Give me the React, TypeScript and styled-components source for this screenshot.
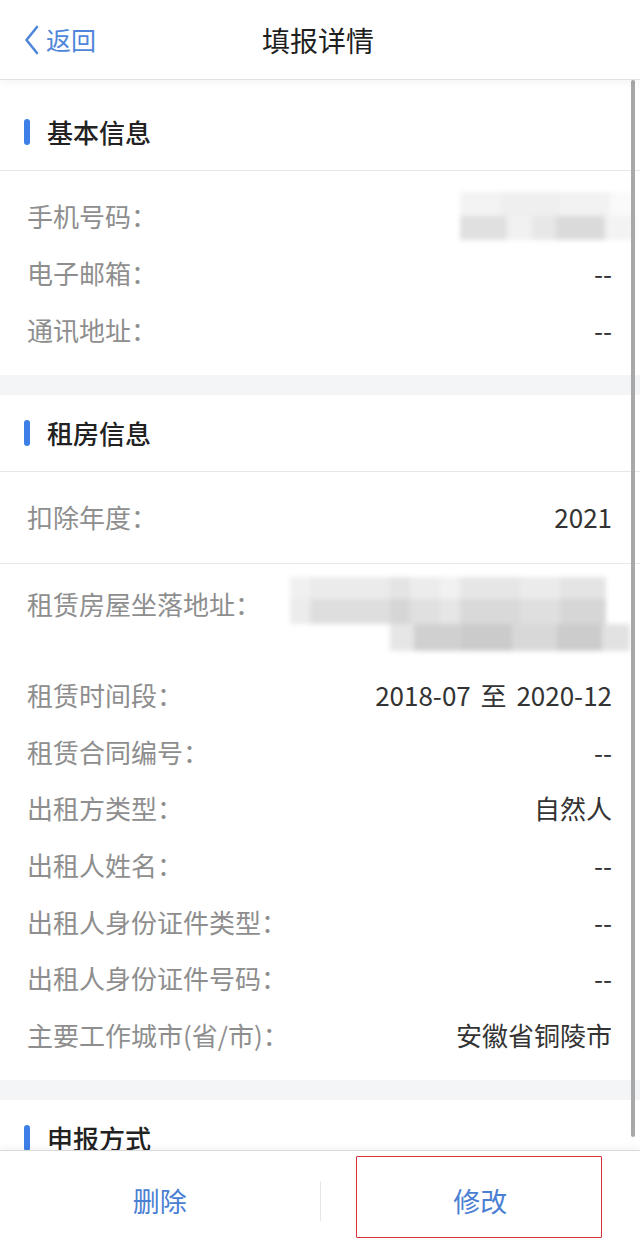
import React from "react";
import styled, { createGlobalStyle } from "styled-components";

const GlobalStyle = createGlobalStyle`
  html, body { margin: 0; padding: 0; background: #ffffff; }
  * { box-sizing: border-box; }
`;

const Page = styled.div`
  height: 1250px;
  width: 640px;
  display: flex;
  flex-direction: column;
  background: #ffffff;
  font-family: "Noto Sans CJK SC", "Noto Sans", sans-serif;
  overflow: hidden;
`;

const Header = styled.header`
  flex-shrink: 0;
  height: 80px;
  display: grid;
  grid-template-columns: 1fr auto 1fr;
  align-items: center;
  padding: 0 24px;
  border-bottom: 1px solid #e2e2e2;
  background: #ffffff;
  position: relative;
  z-index: 2;
  box-shadow: 0 2px 10px rgba(0, 0, 0, 0.05);
`;

const Back = styled.div`
  display: flex;
  align-items: center;
  gap: 6px;
  color: #4f86d9;
  font-size: 25px;
  line-height: 1;
`;

const Title = styled.div`
  font-size: 28px;
  color: #1f1f1f;
  line-height: 1;
  margin-left: -4px;
`;

const Body = styled.main`
  flex: 1;
  position: relative;
  overflow: hidden;
  background: #f4f5f7;
`;

const Section = styled.section<{ $first?: boolean }>`
  background: #ffffff;
  padding-top: ${(p) => (p.$first ? "14px" : "0")};
  & + & {
    margin-top: 20px;
  }
`;

const SectionHead = styled.div`
  height: 77px;
  display: flex;
  align-items: center;
  gap: 17px;
  padding-left: 24px;
  border-bottom: 1px solid #e7e7e7;
`;

const Mark = styled.span`
  width: 6px;
  height: 26px;
  border-radius: 3px;
  background: #3d7fe6;
`;

const SectionTitle = styled.h2`
  margin: 0;
  font-size: 26px;
  font-weight: 500;
  color: #222222;
  line-height: 1;
`;

const Group = styled.div<{ $divided?: boolean }>`
  padding: 17px 0;
  border-bottom: ${(p) => (p.$divided ? "1px solid #e7e7e7" : "none")};
`;

const Row = styled.div<{ $tall?: boolean }>`
  display: flex;
  justify-content: space-between;
  align-items: ${(p) => (p.$tall ? "flex-start" : "center")};
  height: ${(p) => (p.$tall ? "86px" : "56.67px")};
  padding: 0 28px 0 27px;
`;

const Label = styled.span<{ $tall?: boolean }>`
  font-size: 26px;
  color: #8e8e8e;
  line-height: ${(p) => (p.$tall ? "46px" : "1")};
  white-space: nowrap;
`;

const Value = styled.span`
  font-size: 26px;
  color: #333333;
  line-height: 1;
  white-space: nowrap;
  word-spacing: 4px;
`;

const Mosaic = styled.div<{ $width: number; $shift: number; $top: number }>`
  width: ${(p) => p.$width}px;
  margin-right: ${(p) => -p.$shift}px;
  margin-top: ${(p) => p.$top}px;
  display: flex;
  flex-direction: column;
  align-items: flex-end;
  filter: blur(2.5px);
`;

const MosaicLine = styled.div<{ $height: number; $inset: number }>`
  display: flex;
  height: ${(p) => p.$height}px;
  margin-right: ${(p) => p.$inset}px;
`;

const MosaicCell = styled.div<{ $w: number; $c: string }>`
  width: ${(p) => p.$w}px;
  height: 100%;
  background: ${(p) => p.$c};
`;

const Scrollbar = styled.div`
  position: absolute;
  right: 5px;
  top: 0;
  width: 4px;
  height: 1057px;
  border-radius: 2px;
  background: #a8a8a8;
`;

const BottomBar = styled.footer`
  flex-shrink: 0;
  height: 100px;
  display: grid;
  grid-template-columns: 1fr 1px 1fr;
  align-items: center;
  background: #ffffff;
  border-top: 1px solid #dadada;
  box-shadow: 0 -2px 8px rgba(0, 0, 0, 0.05);
  position: relative;
  z-index: 2;
`;

const ActionCell = styled.div`
  position: relative;
  height: 100%;
  display: flex;
  align-items: center;
  justify-content: center;
  font-size: 27px;
  color: #4a80d3;
`;

const Divider = styled.div`
  width: 1px;
  height: 40px;
  background: #e6e6e6;
`;

const Highlight = styled.div`
  position: absolute;
  left: 35px;
  top: 5px;
  width: 246px;
  height: 82px;
  border: 1.5px solid #d7313c;
  border-radius: 1px;
`;

type Cell = [number, string];
type Line = { height: number; inset: number; cells: Cell[] };

const phoneBlur: Line[] = [
  {
    height: 24,
    inset: 0,
    cells: [
      [40, "#f3f3f3"],
      [60, "#efefef"],
      [50, "#f2f2f2"],
      [25, "#fafafa"],
    ],
  },
  {
    height: 24,
    inset: 0,
    cells: [
      [47, "#e0e0e0"],
      [25, "#f1f1f1"],
      [24, "#e7e7e7"],
      [49, "#dadada"],
      [30, "#f3f3f3"],
    ],
  },
];

const addressBlur: Line[] = [
  {
    height: 22,
    inset: 24,
    cells: [
      [20, "#f0f0f0"],
      [80, "#ebebeb"],
      [20, "#e4e4e4"],
      [30, "#ececec"],
      [20, "#f1f1f1"],
      [60, "#e6e6e6"],
      [40, "#ebebeb"],
      [46, "#e4e4e4"],
    ],
  },
  {
    height: 25,
    inset: 24,
    cells: [
      [20, "#ececec"],
      [80, "#dedede"],
      [20, "#d6d6d6"],
      [30, "#e0e0e0"],
      [20, "#e6e6e6"],
      [60, "#d9d9d9"],
      [40, "#dfdfdf"],
      [46, "#d6d6d6"],
    ],
  },
  {
    height: 27,
    inset: 0,
    cells: [
      [24, "#e6e6e6"],
      [48, "#d0d0d0"],
      [50, "#cbcbcb"],
      [45, "#d8d8d8"],
      [45, "#cccccc"],
      [28, "#e2e2e2"],
    ],
  },
];

const Blur: React.FC<{ lines: Line[]; width: number; shift: number; top: number }> = ({
  lines,
  width,
  shift,
  top,
}) => (
  <Mosaic $width={width} $shift={shift} $top={top}>
    {lines.map((line, i) => (
      <MosaicLine key={i} $height={line.height} $inset={line.inset}>
        {line.cells.map(([w, c], j) => (
          <MosaicCell key={j} $w={w} $c={c} />
        ))}
      </MosaicLine>
    ))}
  </Mosaic>
);

const Chevron = () => (
  <svg width="16" height="30" viewBox="0 0 16 30" fill="none">
    <path d="M13 2 L2.5 15 L13 28" stroke="#4f86d9" strokeWidth="2.6" strokeLinecap="round" strokeLinejoin="round" />
  </svg>
);

const basicRows: [string, string][] = [
  ["电子邮箱：", "--"],
  ["通讯地址：", "--"],
];

const rentRows: [string, string][] = [
  ["租赁时间段：", "2018-07 至 2020-12"],
  ["租赁合同编号：", "--"],
  ["出租方类型：", "自然人"],
  ["出租人姓名：", "--"],
  ["出租人身份证件类型：", "--"],
  ["出租人身份证件号码：", "--"],
  ["主要工作城市(省/市)：", "安徽省铜陵市"],
];

export default function App() {
  return (
    <>
      <GlobalStyle />
      <Page>
        <Header>
          <Back>
            <Chevron />
            <span>返回</span>
          </Back>
          <Title>填报详情</Title>
          <span />
        </Header>
        <Body>
          <Section $first>
            <SectionHead>
              <Mark />
              <SectionTitle>基本信息</SectionTitle>
            </SectionHead>
            <Group>
              <Row>
                <Label>手机号码：</Label>
                <Blur lines={phoneBlur} width={175} shift={23} top={0} />
              </Row>
              {basicRows.map(([l, v]) => (
                <Row key={l}>
                  <Label>{l}</Label>
                  <Value>{v}</Value>
                </Row>
              ))}
            </Group>
          </Section>
          <Section>
            <SectionHead>
              <Mark />
              <SectionTitle>租房信息</SectionTitle>
            </SectionHead>
            <Group $divided>
              <Row>
                <Label>扣除年度：</Label>
                <Value>2021</Value>
              </Row>
            </Group>
            <Group>
              <Row $tall>
                <Label $tall>租赁房屋坐落地址：</Label>
                <Blur lines={addressBlur} width={340} shift={18} top={-4} />
              </Row>
              {rentRows.map(([l, v]) => (
                <Row key={l}>
                  <Label>{l}</Label>
                  <Value>{v}</Value>
                </Row>
              ))}
            </Group>
          </Section>
          <Section>
            <SectionHead>
              <Mark />
              <SectionTitle>申报方式</SectionTitle>
            </SectionHead>
          </Section>
          <Scrollbar />
        </Body>
        <BottomBar>
          <ActionCell>删除</ActionCell>
          <Divider />
          <ActionCell>
            <Highlight />
            修改
          </ActionCell>
        </BottomBar>
      </Page>
    </>
  );
}
